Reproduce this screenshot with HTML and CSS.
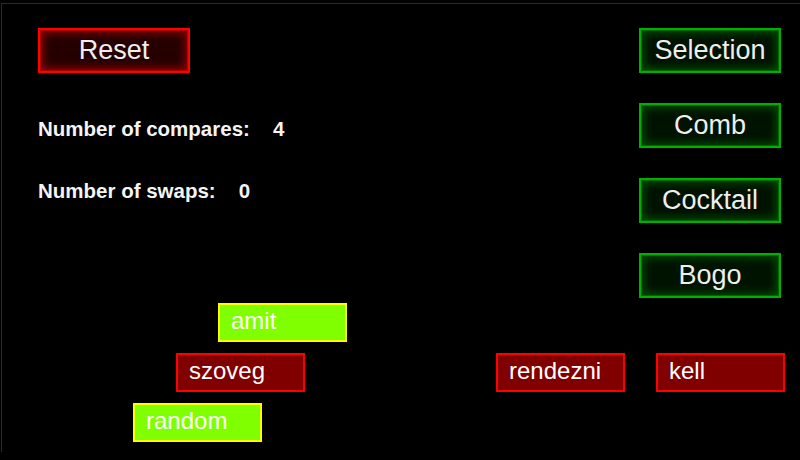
FILE: index.html
```html
<!DOCTYPE html>
<html>
<head>
<meta charset="utf-8">
<link rel="stylesheet" href="styles.css">
</head>
<body>
<div class="frame">
  <div class="top">
    <div class="left">
      <button class="btn btn-red">Reset</button>
      <div class="stat"><span>Number of compares:</span><span>4</span></div>
      <div class="stat"><span>Number of swaps:</span><span>0</span></div>
    </div>
    <div class="right">
      <button class="btn btn-green">Selection</button>
      <button class="btn btn-green">Comb</button>
      <button class="btn btn-green">Cocktail</button>
      <button class="btn btn-green">Bogo</button>
    </div>
  </div>
  <div class="tile tile-sel" style="left:216px;top:299px">amit</div>
  <div class="tile tile-red" style="left:174px;top:349px">szoveg</div>
  <div class="tile tile-sel" style="left:131px;top:399px">random</div>
  <div class="tile tile-red" style="left:494px;top:349px">rendezni</div>
  <div class="tile tile-red" style="left:654px;top:349px">kell</div>
</div>
</body>
</html>
```
FILE: styles.css
```css
html, body {
  margin: 0;
  padding: 0;
  background: #000;
}
body {
  font-family: "Liberation Sans", Arial, sans-serif;
  color: #fff;
  width: 800px;
  height: 460px;
  overflow: hidden;
}
.frame {
  position: relative;
  margin: 3px 0 0 1px;
  height: 449px;
  border-top: 1px solid #2b2b2b;
  border-left: 1px solid #2b2b2b;
  box-sizing: border-box;
}
.top {
  display: flex;
  justify-content: space-between;
  padding: 24px 19px 0 36px;
}
.left {
  display: flex;
  flex-direction: column;
}
.right {
  display: flex;
  flex-direction: column;
  gap: 30px;
}
.btn {
  font-family: "Liberation Sans", Arial, sans-serif;
  font-size: 27px;
  color: #eee;
  height: 45px;
  padding: 0 0 1px;
  box-sizing: border-box;
  border-width: 2px;
  border-style: solid;
  display: flex;
  align-items: center;
  justify-content: center;
}
.btn-red {
  width: 152px;
  background: #260000;
  border-color: #ff0000;
  box-shadow: inset 0 0 0 1px #b00000, inset 0 0 9px 3px #900000;
}
.btn-green {
  width: 142px;
  background: #001200;
  border-color: #00b000;
  box-shadow: inset 0 0 0 1px #006a00, inset 0 0 9px 3px #005000;
}
.stat {
  display: flex;
  gap: 23px;
  font-size: 20.5px;
  font-weight: bold;
  color: #f4f4f4;
  margin-top: 45px;
  line-height: 22px;
}
.stat + .stat {
  margin-top: 40px;
}
.tile {
  position: absolute;
  width: 129px;
  height: 39px;
  box-sizing: border-box;
  border: 2px solid;
  font-size: 24px;
  line-height: 32px;
  padding-left: 11px;
  color: #fff;
}
.tile-sel {
  background: #80ff00;
  border-color: #ffff00;
}
.tile-red {
  background: #800000;
  border-color: #ff0000;
}
```
